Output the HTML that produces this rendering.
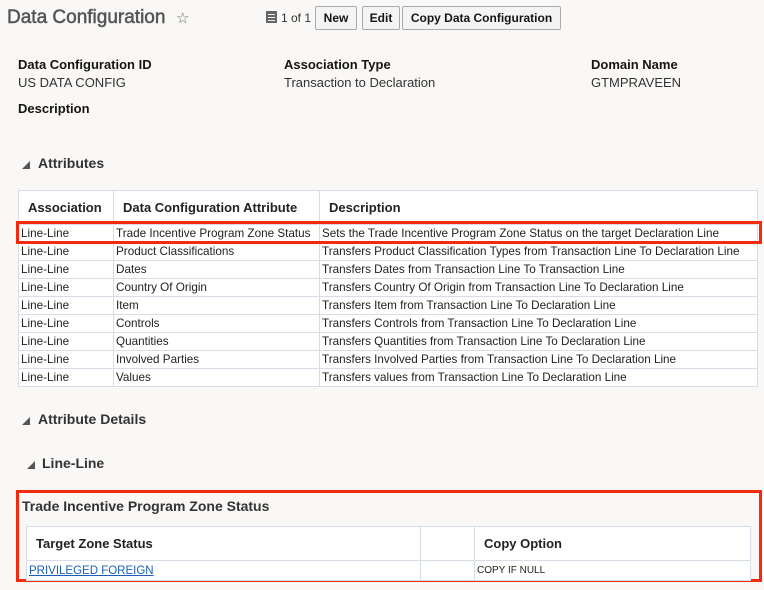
<!DOCTYPE html>
<html><head><style>
body{margin:0;width:764px;height:590px;background:#f9f8f6;font-family:"Liberation Sans",sans-serif;color:#161513;position:relative;overflow:hidden}
.a{position:absolute;white-space:nowrap}
.b{font-weight:bold;font-size:13px}
.v{font-size:13px;color:#333}
.btn{position:absolute;top:6px;height:22px;border:1px solid #aaa;border-radius:2px;background:#f4f4f4;font-size:12px;font-weight:bold;line-height:22px;text-align:center}
table{border-collapse:collapse;position:absolute;background:#fff;table-layout:fixed}
td,th{border:1px solid #d6dde6;font-size:11.7px;padding:0 2px;height:17px;text-align:left;white-space:nowrap;overflow:hidden;color:#222}
th{font-size:13px;font-weight:bold;height:33px;padding:0 9px}
.tri{position:absolute;width:0;height:0;border-left:8px solid transparent;border-bottom:8px solid #555}
.red{position:absolute;border:3px solid #f42a0f}
</style></head><body>
<div class="a" style="left:7px;top:7px;font-size:19px;color:#555;-webkit-text-stroke:0.5px #555">Data Configuration</div>
<div class="a" style="left:176px;top:9px;font-size:15px;color:#666">☆</div>
<div class="a" style="left:266px;top:11px;width:11px;height:12px;background:#666"></div>
<div class="a" style="left:268px;top:14px;width:7px;height:1px;background:#eee"></div>
<div class="a" style="left:268px;top:17px;width:7px;height:1px;background:#eee"></div>
<div class="a" style="left:268px;top:20px;width:7px;height:1px;background:#eee"></div>
<div class="a" style="left:281px;top:11px;font-size:12px;color:#333">1 of 1</div>
<div class="btn" style="left:315px;width:40px">New</div>
<div class="btn" style="left:362px;width:36px">Edit</div>
<div class="btn" style="left:402px;width:157px">Copy Data Configuration</div>
<div class="a b" style="left:18px;top:57px">Data Configuration ID</div>
<div class="a v" style="left:18px;top:75px">US DATA CONFIG</div>
<div class="a b" style="left:284px;top:57px">Association Type</div>
<div class="a v" style="left:284px;top:75px">Transaction to Declaration</div>
<div class="a b" style="left:591px;top:57px">Domain Name</div>
<div class="a v" style="left:591px;top:75px">GTMPRAVEEN</div>
<div class="a b" style="left:18px;top:101px">Description</div>
<div class="tri" style="left:22px;top:161px"></div>
<div class="a" style="left:38px;top:155px;font-size:14px;font-weight:bold;color:#333">Attributes</div>
<table style="left:18px;top:190px;width:740px">
<col style="width:95px"><col style="width:206px"><col>
<tr><th>Association</th><th>Data Configuration Attribute</th><th>Description</th></tr>
<tr><td>Line-Line</td><td>Trade Incentive Program Zone Status</td><td>Sets the Trade Incentive Program Zone Status on the target Declaration Line</td></tr>
<tr><td>Line-Line</td><td>Product Classifications</td><td>Transfers Product Classification Types from Transaction Line To Declaration Line</td></tr>
<tr><td>Line-Line</td><td>Dates</td><td>Transfers Dates from Transaction Line To Transaction Line</td></tr>
<tr><td>Line-Line</td><td>Country Of Origin</td><td>Transfers Country Of Origin from Transaction Line To Declaration Line</td></tr>
<tr><td>Line-Line</td><td>Item</td><td>Transfers Item from Transaction Line To Declaration Line</td></tr>
<tr><td>Line-Line</td><td>Controls</td><td>Transfers Controls from Transaction Line To Declaration Line</td></tr>
<tr><td>Line-Line</td><td>Quantities</td><td>Transfers Quantities from Transaction Line To Declaration Line</td></tr>
<tr><td>Line-Line</td><td>Involved Parties</td><td>Transfers Involved Parties from Transaction Line To Declaration Line</td></tr>
<tr><td>Line-Line</td><td>Values</td><td>Transfers values from Transaction Line To Declaration Line</td></tr>
</table>
<div class="red" style="left:16px;top:221px;width:740px;height:17px"></div>
<div class="tri" style="left:22px;top:417px"></div>
<div class="a" style="left:38px;top:411px;font-size:14px;font-weight:bold;color:#333">Attribute Details</div>
<div class="tri" style="left:27px;top:461px"></div>
<div class="a" style="left:42px;top:455px;font-size:14px;font-weight:bold;color:#333">Line-Line</div>
<div class="red" style="left:16px;top:490px;width:740px;height:86px"></div>
<div class="a" style="left:22px;top:498px;font-size:14px;font-weight:bold;color:#333">Trade Incentive Program Zone Status</div>
<table style="left:26px;top:526px;width:725px">
<col style="width:394px"><col style="width:54px"><col>
<tr><th>Target Zone Status</th><th></th><th>Copy Option</th></tr>
<tr><td style="height:19px"><span style="color:#1a5fb4;text-decoration:underline;font-size:11.5px">PRIVILEGED FOREIGN</span></td><td></td><td style="font-size:10px">COPY IF NULL</td></tr>
</table>
</body></html>
